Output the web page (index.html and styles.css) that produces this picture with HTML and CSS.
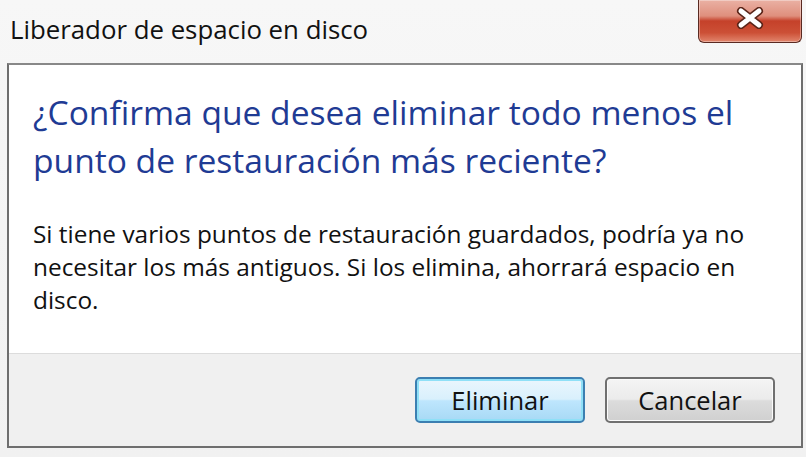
FILE: index.html
```html
<!DOCTYPE html>
<html lang="es">
<head>
  <meta charset="UTF-8">
  <title>Liberador de espacio en disco</title>
  <link rel="stylesheet" href="styles.css">
</head>
<body>

  <div class="ventana">
    <div class="barra">
      <div class="titulo">Liberador de espacio en disco</div>
      <div class="cerrar">
        <svg width="30" height="22" viewBox="0 0 30 22">
          <path d="M6 4 L24 18 M24 4 L6 18" stroke="#5a2418" stroke-width="8" stroke-linecap="round"/>
          <path d="M6 4 L24 18 M24 4 L6 18" stroke="#ffffff" stroke-width="5" stroke-linecap="round"/>
        </svg>
      </div>
    </div>

    <div class="panel">
      <div class="contenido">
        <h1>¿Confirma que desea eliminar todo menos el<br>punto de restauración más reciente?</h1>
        <p>Si tiene varios puntos de restauración guardados, podría ya no<br>necesitar los más antiguos. Si los elimina, ahorrará espacio en<br>disco.</p>
      </div>
      <div class="pie">
        <button class="boton principal">Eliminar</button>
        <button class="boton">Cancelar</button>
      </div>
    </div>
  </div>

</body>
</html>
```

FILE: styles.css
```css
body {
  margin: 0;
  font-family: "Open Sans", "Noto Sans", sans-serif;
  background: #f3f3f3;
}
.ventana {
  width: 806px;
  height: 457px;
  overflow: hidden;
  background: linear-gradient(180deg, #f7f7f7 0%, #f1f1f1 100%);
}
.barra {
  height: 63px;
  display: flex;
  justify-content: space-between;
  align-items: flex-start;
}
.titulo {
  margin: 11px 0 0 10px;
  font-size: 25.8px;
  color: #111;
}
.cerrar {
  width: 102px;
  height: 42px;
  margin-right: 4px;
  border: 1px solid #5a2a22;
  border-top: none;
  border-radius: 0 0 6px 6px;
  background: linear-gradient(180deg, #eab1a4 0%, #df8f7d 38%, #c5412a 50%, #cc5036 78%, #e2866d 100%);
  display: flex;
  align-items: center;
  justify-content: center;
  box-shadow: inset 0 0 0 1px rgba(255,255,255,0.35);
}
.cerrar svg {
  margin-top: -6px;
}
.panel {
  margin: 0 3px 0 7px;
  height: 385px;
  box-sizing: border-box;
  border: 2px solid #6e6e6e;
  border-top-color: #888;
  display: flex;
  flex-direction: column;
}
.contenido {
  flex: 1;
  background: #fff;
  padding: 23px 0 0 24px;
}
h1 {
  margin: 0;
  font-weight: normal;
  font-size: 33.6px;
  line-height: 48px;
  color: #1f3b94;
}
p {
  margin: 33px 0 0;
  font-size: 24.4px;
  line-height: 33px;
  color: #111;
}
.pie {
  height: 93px;
  flex-shrink: 0;
  background: #f0f0f0;
  border-top: 1px solid #dcdcdc;
  display: flex;
  justify-content: flex-end;
  align-items: flex-start;
  gap: 20px;
  padding: 23px 26px 0 0;
  box-sizing: border-box;
}
.boton {
  width: 170px;
  height: 46px;
  font-family: "Open Sans", "Noto Sans", sans-serif;
  font-size: 25.5px;
  color: #111;
  border: 2px solid #707070;
  border-radius: 5px;
  background: linear-gradient(180deg, #f4f4f4 0%, #ebebeb 48%, #dcdcdc 52%, #d0d0d0 100%);
  box-shadow: inset 0 0 0 1px #fbfbfb;
  padding: 0;
}
.principal {
  border-color: #3c7fb1;
  background: linear-gradient(180deg, #eaf6fd 0%, #d9f0fc 48%, #bee6fd 52%, #a7d9f5 100%);
  box-shadow: inset 0 0 0 2px #8fe0f7;
}
```
